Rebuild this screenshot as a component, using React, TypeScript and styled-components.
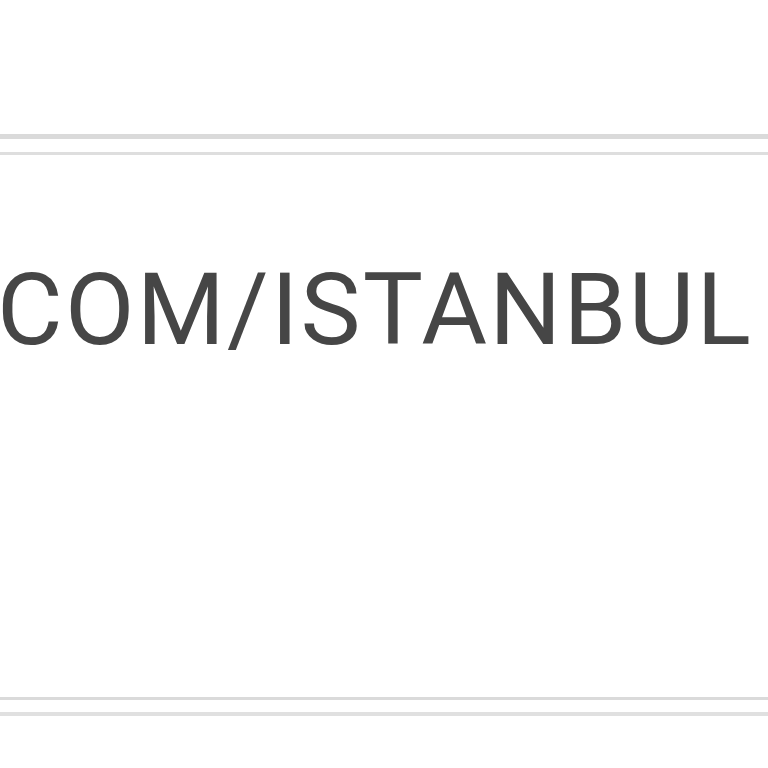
import React from "react";
import styled, { createGlobalStyle } from "styled-components";

const Global = createGlobalStyle`
  html, body { margin: 0; padding: 0; background: #ffffff; }
  body { font-family: Roboto, "Noto Sans", sans-serif; }
`;

const Page = styled.div`
  width: 768px;
  height: 768px;
  overflow: hidden;
  padding-top: 134px;
  box-sizing: border-box;
`;

const Rule = styled.div<{ $h: number; $c: string }>`
  height: ${(p) => p.$h}px;
  background: ${(p) => p.$c};
`;

const Panel = styled.div`
  margin: 13px 0 12px;
  border-top: 3px solid #dedede;
  border-bottom: 3px solid #dadada;
  height: 542px;
  display: flex;
  align-items: flex-start;
  padding-top: 104px;
  box-sizing: border-box;
  height: 548px;
`;

const Label = styled.div`
  font-family: Roboto, "Noto Sans", sans-serif;
  font-size: 101px;
  line-height: 1;
  color: #464646;
  white-space: nowrap;
  margin-left: -3px;
  letter-spacing: 2.2px;
`;

export default function App() {
  return (
    <>
      <Global />
      <Page>
        <Rule $h={5} $c="#dadada" />
        <Panel>
          <Label>COM/ISTANBUL</Label>
        </Panel>
        <Rule $h={4} $c="#e0e0e0" />
      </Page>
    </>
  );
}
